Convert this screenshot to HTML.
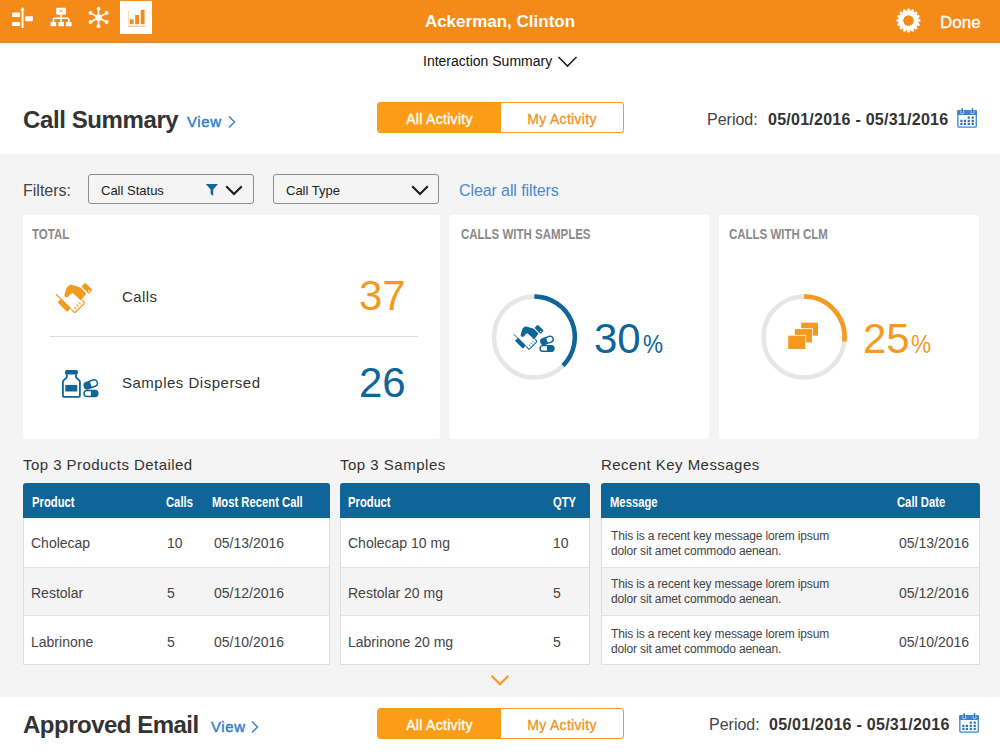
<!DOCTYPE html>
<html><head><meta charset="utf-8">
<style>
*{margin:0;padding:0;box-sizing:border-box}
html,body{width:1000px;height:754px;overflow:hidden;background:#fff;font-family:"Liberation Sans",sans-serif;color:#333}
.abs{position:absolute}
#hdr{position:absolute;left:0;top:0;width:1000px;height:42px;background:#f48b18}
#grey{position:absolute;left:0;top:154px;width:1000px;height:543px;background:#f4f4f4}
.t{position:absolute;white-space:nowrap;line-height:1}
.card{position:absolute;background:#fff;border-radius:3px}
.cap{position:absolute;font-weight:bold;color:#8a8a8a;font-size:14px;transform-origin:0 0;transform:scaleX(.82);white-space:nowrap;line-height:1}
.seg{position:absolute;width:247px;height:31px;border:1px solid #f39a1f;border-radius:3px;overflow:hidden;background:#fff}
.seg .a{position:absolute;left:0;top:0;width:123px;height:29px;background:#fb9d17;color:#fff;font-size:14px;-webkit-text-stroke:.35px #fff;letter-spacing:.3px;text-align:center;line-height:32px}
.seg .b{position:absolute;left:123px;top:0;width:122px;height:29px;color:#f0961e;font-size:14px;-webkit-text-stroke:.35px #f0961e;letter-spacing:.3px;text-align:center;line-height:32px}
.dd{position:absolute;height:30px;border:1px solid #8c8c8c;border-radius:3px;background:#f4f4f4}
.tbl{position:absolute;background:#fff;border:1px solid #dedede;border-top:none;border-radius:3px 3px 0 0}
.th{position:absolute;left:-1px;top:0;height:35px;background:#0f6598;border-radius:3px 3px 0 0}
.thx{position:absolute;color:#fff;font-weight:bold;font-size:15px;transform-origin:0 0;transform:scaleX(.75);white-space:nowrap;line-height:1}
.row{position:absolute;left:0;height:49px;border-top:1px solid #e3e3e3}
.row.g{background:#f4f4f4}
.msg{position:absolute;font-size:12px;color:#444;white-space:nowrap;line-height:15px;letter-spacing:-.15px}
.cell{position:absolute;font-size:14px;color:#444;white-space:nowrap;line-height:1}
</style></head><body>
<div id="hdr">
  <!-- icon 1 -->
  <svg class="abs" style="left:10px;top:6px" width="26" height="24" viewBox="10 6 26 24">
    <rect x="12" y="12.6" width="8" height="4.5" rx="1" fill="#fff"/>
    <rect x="12" y="21.9" width="8" height="4" rx="1" fill="#fff"/>
    <rect x="25.2" y="16.2" width="7.8" height="5" rx="1" fill="#fff"/>
    <rect x="21.6" y="9" width="1.9" height="19" fill="#fff"/>
    <path d="M20.3 10.5 L22.5 7 L24.7 10.5 Z" fill="#fff"/>
  </svg>
  <!-- icon 2 org -->
  <svg class="abs" style="left:48px;top:6px" width="26" height="24" viewBox="48 6 26 24">
    <rect x="56.2" y="7.7" width="9.8" height="7" rx="1" fill="#fff"/><rect x="59.2" y="9.8" width="3.8" height="2.6" fill="#f9c796"/>
    <rect x="60.3" y="14.5" width="1.6" height="8" fill="#fff"/>
    <path d="M53.4 22 V19.5 Q53.4 18.3 54.6 18.3 H67.6 Q68.8 18.3 68.8 19.5 V22" stroke="#fff" stroke-width="1.6" fill="none"/>
    <rect x="50.6" y="22" width="5.6" height="4.2" rx=".6" fill="#fff"/>
    <rect x="58.3" y="22" width="5.6" height="4.2" rx=".6" fill="#fff"/>
    <rect x="66" y="22" width="5.6" height="4.2" rx=".6" fill="#fff"/>
  </svg>
  <!-- icon 3 hub -->
  <svg class="abs" style="left:86px;top:5px" width="26" height="26" viewBox="86 5 26 26">
    <g stroke="#fff" stroke-width="1.6">
      <line x1="98.5" y1="17.8" x2="98.5" y2="8.7"/><line x1="98.5" y1="17.8" x2="98.5" y2="26.2"/>
      <line x1="98.5" y1="17.8" x2="90.5" y2="12.9"/><line x1="98.5" y1="17.8" x2="106.6" y2="12.9"/>
      <line x1="98.5" y1="17.8" x2="90.5" y2="22"/><line x1="98.5" y1="17.8" x2="106.6" y2="22"/>
    </g>
    <g fill="#fff">
      <circle cx="98.5" cy="17.8" r="3.3"/>
      <circle cx="98.5" cy="8.7" r="1.9"/><circle cx="98.5" cy="26.2" r="1.9"/>
      <circle cx="90.5" cy="12.9" r="1.9"/><circle cx="106.6" cy="12.9" r="1.9"/>
      <circle cx="90.5" cy="22" r="1.9"/><circle cx="106.6" cy="22" r="1.9"/>
    </g>
  </svg>
  <!-- icon 4 selected chart -->
  <div class="abs" style="left:120px;top:1px;width:32px;height:33px;background:#fff"></div>
  <svg class="abs" style="left:120px;top:1px" width="32" height="33" viewBox="120 1 32 33">
    <rect x="128" y="10.5" width=".8" height="14" fill="#f9d2a8"/>
    <rect x="129.8" y="19.3" width="3.8" height="4.9" fill="#f48b18"/>
    <rect x="135.2" y="15" width="3.9" height="9.2" fill="#f48b18"/>
    <rect x="140.8" y="9.8" width="3.8" height="14.4" fill="#f48b18"/>
    <rect x="128" y="25.6" width="17.2" height="1" fill="#f6b577"/>
  </svg>
  <div class="t" style="left:0;width:1000px;text-align:center;top:13px;font-size:17px;color:#fff;font-weight:bold">Ackerman, Clinton</div>
  <!-- gear -->
  <svg class="abs" style="left:895px;top:7px" width="28" height="28" viewBox="-13.5 -13.5 28 28"><g fill="#fff"><circle r="10.3"/><rect x="-1.35" y="-12" width="2.7" height="3" rx="1" transform="rotate(0.0)"/><rect x="-1.35" y="-12" width="2.7" height="3" rx="1" transform="rotate(22.5)"/><rect x="-1.35" y="-12" width="2.7" height="3" rx="1" transform="rotate(45.0)"/><rect x="-1.35" y="-12" width="2.7" height="3" rx="1" transform="rotate(67.5)"/><rect x="-1.35" y="-12" width="2.7" height="3" rx="1" transform="rotate(90.0)"/><rect x="-1.35" y="-12" width="2.7" height="3" rx="1" transform="rotate(112.5)"/><rect x="-1.35" y="-12" width="2.7" height="3" rx="1" transform="rotate(135.0)"/><rect x="-1.35" y="-12" width="2.7" height="3" rx="1" transform="rotate(157.5)"/><rect x="-1.35" y="-12" width="2.7" height="3" rx="1" transform="rotate(180.0)"/><rect x="-1.35" y="-12" width="2.7" height="3" rx="1" transform="rotate(202.5)"/><rect x="-1.35" y="-12" width="2.7" height="3" rx="1" transform="rotate(225.0)"/><rect x="-1.35" y="-12" width="2.7" height="3" rx="1" transform="rotate(247.5)"/><rect x="-1.35" y="-12" width="2.7" height="3" rx="1" transform="rotate(270.0)"/><rect x="-1.35" y="-12" width="2.7" height="3" rx="1" transform="rotate(292.5)"/><rect x="-1.35" y="-12" width="2.7" height="3" rx="1" transform="rotate(315.0)"/><rect x="-1.35" y="-12" width="2.7" height="3" rx="1" transform="rotate(337.5)"/></g><circle r="5.3" fill="#f48b18"/></svg>
  <div class="t" style="left:940px;top:14px;font-size:17px;color:#fff;-webkit-text-stroke:.3px #fff">Done</div>
</div>

<div class="abs" style="left:0;top:41px;width:1000px;height:1px;background:#ea8618"></div><div class="abs" style="left:0;top:42px;width:1000px;height:1px;background:#dc9040"></div><div class="abs" style="left:0;top:43px;width:1000px;height:1px;background:#fdf8e6"></div>
<div class="t" style="left:423px;top:54px;font-size:14px;color:#111">Interaction Summary</div>
<svg class="abs" style="left:557px;top:55px" width="21" height="13" viewBox="0 0 21 13"><path d="M1.5 2 L10.5 11 L19.5 2" stroke="#222" stroke-width="1.6" fill="none"/></svg>

<div class="t" style="left:23px;top:108px;font-size:24px;font-weight:bold;color:#333;letter-spacing:-.4px">Call Summary</div>
<div class="t" style="left:187px;top:114px;font-size:15px;letter-spacing:.6px;color:#2f80c8;-webkit-text-stroke:.45px #2f80c8">View</div>
<svg class="abs" style="left:227px;top:115px" width="10" height="14" viewBox="0 0 10 14"><path d="M2 1.5 L7.5 7 L2 12.5" stroke="#2f80c8" stroke-width="1.4" fill="none"/></svg>

<div class="seg" style="left:377px;top:102px"><div class="a">All Activity</div><div class="b">My Activity</div></div>

<div class="t" style="left:707px;top:112px;font-size:16px;color:#444">Period:</div>
<div class="t" style="left:768px;top:112px;font-size:16px;font-weight:bold;color:#333;letter-spacing:.26px">05/01/2016 - 05/31/2016</div>
<svg class="abs" style="left:956px;top:106px" width="23" height="23" viewBox="0 0 23 23">
  <rect x="1.85" y="4.65" width="18.4" height="16.5" rx="1.2" fill="none" stroke="#3a84d4" stroke-width="1.3"/>
  <rect x="1.2" y="4" width="19.7" height="5" rx="1" fill="#3a84d4"/>
  <circle cx="6.2" cy="6.2" r="1.6" fill="none" stroke="#cfe0f5" stroke-width=".9"/>
  <circle cx="16.5" cy="6.2" r="1.6" fill="none" stroke="#cfe0f5" stroke-width=".9"/>
  <rect x="5.5" y="2.2" width="1.4" height="4.4" fill="#2a6fba"/><rect x="15.8" y="2.2" width="1.4" height="4.4" fill="#2a6fba"/>
  <g fill="#2f6fbf">
    <rect x="11.7" y="10.5" width="2.2" height="2.2"/><rect x="15.6" y="10.5" width="2.2" height="2.2"/>
    <rect x="4.3" y="13.8" width="2.2" height="2.2"/><rect x="7.8" y="13.8" width="2.2" height="2.2"/><rect x="11.7" y="13.8" width="2.2" height="2.2"/><rect x="15.6" y="13.8" width="2.2" height="2.2"/>
    <rect x="4.3" y="16.8" width="2.2" height="2.2"/><rect x="7.8" y="16.8" width="2.2" height="2.2"/><rect x="11.7" y="16.8" width="2.2" height="2.2"/><rect x="15.6" y="16.8" width="2.2" height="2.2"/>
  </g>
</svg>

<div id="grey"></div>

<div class="t" style="left:23px;top:183px;font-size:16px;color:#444">Filters:</div>
<div class="dd" style="left:88px;top:174px;width:166px"></div>
<div class="t" style="left:101px;top:184px;font-size:13px;color:#222">Call Status</div>
<svg class="abs" style="left:205px;top:183px" width="14" height="14" viewBox="0 0 14 14"><path d="M0.8 1 H13 L8.2 6.6 V13 L5.6 10.8 V6.6 Z" fill="#0f6598"/></svg>
<svg class="abs" style="left:225px;top:185px" width="18" height="11" viewBox="0 0 18 11"><path d="M1.2 1.2 L9 9 L16.8 1.2" stroke="#1a1a1a" stroke-width="2" fill="none"/></svg>
<div class="dd" style="left:273px;top:174px;width:166px"></div>
<div class="t" style="left:286px;top:184px;font-size:13px;color:#222">Call Type</div>
<svg class="abs" style="left:411px;top:185px" width="18" height="11" viewBox="0 0 18 11"><path d="M1.2 1.2 L9 9 L16.8 1.2" stroke="#1a1a1a" stroke-width="2" fill="none"/></svg>
<div class="t" style="left:459px;top:183px;font-size:16px;color:#4a8bd0;letter-spacing:-.1px">Clear all filters</div>

<div class="card" style="left:23px;top:215px;width:417px;height:224px"></div>
<div class="card" style="left:449px;top:215px;width:260px;height:224px"></div>
<div class="card" style="left:719px;top:215px;width:260px;height:224px"></div>

<div class="cap" style="left:32px;top:227px">TOTAL</div>
<div class="cap" style="left:461px;top:227px">CALLS WITH SAMPLES</div>
<div class="cap" style="left:729px;top:227px">CALLS WITH CLM</div>

<svg width="0" height="0" style="position:absolute"><defs><g id="hs">
  <g fill="currentColor">
    <path d="M14.4 17.4 L15.6 12.6 Q16.6 8.4 19.4 7.2 Q20.8 6.6 22.4 7.1 L29.6 9.3 Q30.6 9.6 31.4 10.4 L35.6 14.8 Q36.2 15.6 35.6 16.4 L31.6 21.8 Q30.8 22.6 30 21.8 L22.8 15 L20.2 16.6 L18.6 18.6 Q17.6 19.4 16.2 19.2 Q14.2 18.8 14.4 17.4 Z"/>
    <path d="M31.4 8.6 L34.4 5.4 Q35.2 4.6 36 5.4 L41.8 11.2 Q42.6 12 41.8 12.8 L38.6 15.8 Z"/>
    <path d="M8.2 23.4 L11.4 20.4 L21 30 L18 33.2 Q17.2 34 16.4 33.2 L8.4 25.2 Q7.6 24.2 8.2 23.4 Z"/>
  </g>
  <path d="M6 16.3 L11.6 21.6" stroke="currentColor" stroke-width="1.2"/>
  <circle cx="38.8" cy="12.8" r="0.9" fill="#fff"/>
  <path d="M21.2 31.2 L24 34 Q24.8 34.8 25.6 34 L34 25.6 Q34.6 25 34 24.4 L31.8 22.2" stroke="currentColor" stroke-width="1.3" fill="none"/>
  <g stroke="currentColor" stroke-width="1.1">
    <line x1="24.4" y1="28.8" x2="26.4" y2="30.8"/><line x1="26.6" y1="26.6" x2="28.6" y2="28.6"/><line x1="28.8" y1="24.4" x2="30.8" y2="26.4"/>
  </g>
</g></defs></svg>
<!-- handshake orange -->
<svg class="abs" style="left:50px;top:278px;color:#f39a1f" width="48" height="40" viewBox="0 0 48 40"><use href="#hs"/></svg>
<div class="t" style="left:122px;top:289px;font-size:15px;color:#333;letter-spacing:.4px">Calls</div>
<div class="t" style="left:359px;top:275px;font-size:42px;color:#f39a1f">37</div>
<div class="abs" style="left:50px;top:336px;width:368px;height:1px;background:#dcdcdc"></div>
<!-- bottle -->
<svg class="abs" style="left:50px;top:360px" width="60" height="45" viewBox="0 0 60 45">
  <g fill="none" stroke="#0f6598" stroke-width="1.8">
    <path d="M16.8 14.2 V17.4 L13.6 20.4 Q12.9 21.1 12.9 22.1 V35.2 Q12.9 36.9 14.6 36.9 H28.2 Q29.9 36.9 29.9 35.2 V22.1 Q29.9 21.1 29.2 20.4 L26 17.4 V14.2"/>
  </g>
  <rect x="15" y="9.9" width="12.9" height="4.6" rx="1.6" fill="#0f6598"/>
  <rect x="15.3" y="24.9" width="12" height="6.6" fill="#0f6598"/>
  <g transform="rotate(-20 40.8 24.3)">
    <rect x="34" y="21" width="13.6" height="6.6" rx="3.3" fill="none" stroke="#0f6598" stroke-width="1.5"/>
    <path d="M37.3 21 H40.8 V27.6 H37.3 A3.3 3.3 0 0 1 37.3 21 Z" fill="#0f6598"/>
  </g>
  <rect x="34" y="30.6" width="13.8" height="6" rx="3" fill="none" stroke="#0f6598" stroke-width="1.5"/>
  <path d="M40.9 30.6 H44.8 A3 3 0 0 1 44.8 36.6 H40.9 Z" fill="#0f6598"/>
</svg>
<div class="t" style="left:122px;top:375px;font-size:15px;color:#333;letter-spacing:.5px">Samples Dispersed</div>
<div class="t" style="left:359px;top:362px;font-size:42px;color:#0f6598">26</div>

<!-- ring 1 -->
<svg class="abs" style="left:489px;top:292px" width="90" height="90" viewBox="0 0 90 90">
  <circle cx="45.4" cy="45" r="40.5" fill="none" stroke="#e6e6e6" stroke-width="4.5"/>
  <path d="M45.4 4.5 A40.5 40.5 0 0 1 74 73.6" fill="none" stroke="#0f6598" stroke-width="4.5"/>
</svg>

<svg class="abs" style="left:505px;top:318px;color:#0f6598" width="56" height="40" viewBox="505 318 56 40">
  <g transform="translate(508.8 320.9) scale(.82)"><use href="#hs"/></g>
  <g transform="rotate(-20 547 340.4)">
    <rect x="540.6" y="337.4" width="12.8" height="6" rx="3" fill="none" stroke="#0f6598" stroke-width="1.4"/>
    <path d="M543.6 337.4 H547 V343.4 H543.6 A3 3 0 0 1 543.6 337.4 Z" fill="#0f6598"/>
  </g>
  <rect x="540" y="345.6" width="14" height="5.6" rx="2.8" fill="none" stroke="#0f6598" stroke-width="1.4"/>
  <path d="M547 345.6 H551.2 A2.8 2.8 0 0 1 551.2 351.2 H547 Z" fill="#0f6598"/>
</svg>
<div class="t" style="left:594px;top:318px;font-size:42px;color:#0f6598">30</div>
<div class="t" style="left:643px;top:332px;font-size:25px;transform:scaleX(.9);transform-origin:0 0;color:#0f6598">%</div>
<!-- ring 2 -->
<svg class="abs" style="left:759px;top:292px" width="90" height="90" viewBox="0 0 90 90">
  <circle cx="45" cy="45" r="40.5" fill="none" stroke="#e6e6e6" stroke-width="4.5"/>
  <path d="M45 4.5 A40.5 40.5 0 0 1 85.4 49.5" fill="none" stroke="#f39a1f" stroke-width="4.5"/>
</svg>
<svg class="abs" style="left:785px;top:320px" width="36" height="32" viewBox="785 320 36 32">
  <rect x="801.2" y="322.7" width="16.8" height="13" fill="#f39a1f"/>
  <rect x="794" y="328.3" width="18.8" height="14.9" fill="#fff"/>
  <rect x="794.8" y="329.1" width="17.2" height="13.3" fill="#f39a1f"/>
  <rect x="787.4" y="334.9" width="18.8" height="14.9" fill="#fff"/>
  <rect x="788.2" y="335.7" width="17.2" height="13.3" fill="#f39a1f"/>
</svg>
<div class="t" style="left:863px;top:318px;font-size:42px;color:#f39a1f">25</div>
<div class="t" style="left:911px;top:332px;font-size:25px;transform:scaleX(.9);transform-origin:0 0;color:#f39a1f">%</div>

<!-- section titles -->
<div class="t" style="left:23px;top:457px;font-size:15px;color:#333;letter-spacing:.45px">Top 3 Products Detailed</div>
<div class="t" style="left:340px;top:457px;font-size:15px;color:#333;letter-spacing:.5px">Top 3 Samples</div>
<div class="t" style="left:601px;top:457px;font-size:15px;color:#333;letter-spacing:.45px">Recent Key Messages</div>

<!-- table 1 -->
<div class="tbl" style="left:23px;top:483px;width:307px;height:182px">
  <div class="th" style="width:307px"></div>
  <div class="row" style="top:34px;width:305px;border-top:none"></div>
  <div class="row g" style="top:84px;width:305px"></div>
  <div class="row" style="top:132px;width:305px"></div>
</div>
<div class="thx" style="left:32px;top:494px">Product</div>
<div class="thx" style="left:166px;top:494px">Calls</div>
<div class="thx" style="left:212px;top:494px">Most Recent Call</div>
<div class="cell" style="left:31px;top:536px">Cholecap</div>
<div class="cell" style="left:167px;top:536px">10</div>
<div class="cell" style="left:214px;top:536px">05/13/2016</div>
<div class="cell" style="left:31px;top:586px">Restolar</div>
<div class="cell" style="left:167px;top:586px">5</div>
<div class="cell" style="left:214px;top:586px">05/12/2016</div>
<div class="cell" style="left:31px;top:635px">Labrinone</div>
<div class="cell" style="left:167px;top:635px">5</div>
<div class="cell" style="left:214px;top:635px">05/10/2016</div>

<!-- table 2 -->
<div class="tbl" style="left:340px;top:483px;width:250px;height:182px">
  <div class="th" style="width:250px"></div>
  <div class="row" style="top:34px;width:248px;border-top:none"></div>
  <div class="row g" style="top:84px;width:248px"></div>
  <div class="row" style="top:132px;width:248px"></div>
</div>
<div class="thx" style="left:348px;top:494px">Product</div>
<div class="thx" style="left:553px;top:494px">QTY</div>
<div class="cell" style="left:348px;top:536px">Cholecap 10 mg</div>
<div class="cell" style="left:553px;top:536px">10</div>
<div class="cell" style="left:348px;top:586px">Restolar 20 mg</div>
<div class="cell" style="left:553px;top:586px">5</div>
<div class="cell" style="left:348px;top:635px">Labrinone 20 mg</div>
<div class="cell" style="left:553px;top:635px">5</div>

<!-- table 3 -->
<div class="tbl" style="left:601px;top:483px;width:379px;height:182px">
  <div class="th" style="width:379px"></div>
  <div class="row" style="top:34px;width:377px;border-top:none"></div>
  <div class="row g" style="top:84px;width:377px"></div>
  <div class="row" style="top:132px;width:377px"></div>
</div>
<div class="thx" style="left:610px;top:494px">Message</div>
<div class="thx" style="left:897px;top:494px">Call Date</div>
<div class="msg" style="left:611px;top:529px">This is a recent key message lorem ipsum<br>dolor sit amet commodo aenean.</div>
<div class="cell" style="left:899px;top:536px">05/13/2016</div>
<div class="msg" style="left:611px;top:577px">This is a recent key message lorem ipsum<br>dolor sit amet commodo aenean.</div>
<div class="cell" style="left:899px;top:586px">05/12/2016</div>
<div class="msg" style="left:611px;top:627px">This is a recent key message lorem ipsum<br>dolor sit amet commodo aenean.</div>
<div class="cell" style="left:899px;top:635px">05/10/2016</div>

<svg class="abs" style="left:490px;top:674px" width="20" height="13" viewBox="0 0 20 13"><path d="M1.5 1.8 L10 10.2 L18.5 1.8" stroke="#f39a1f" stroke-width="2.2" fill="none"/></svg>

<!-- bottom section -->
<div class="t" style="left:23px;top:713px;font-size:24px;font-weight:bold;color:#333;letter-spacing:-.5px">Approved Email</div>
<div class="t" style="left:211px;top:719px;font-size:15px;letter-spacing:.6px;color:#2f80c8;-webkit-text-stroke:.45px #2f80c8">View</div>
<svg class="abs" style="left:250px;top:720px" width="10" height="14" viewBox="0 0 10 14"><path d="M2 1.5 L7.5 7 L2 12.5" stroke="#2f80c8" stroke-width="1.4" fill="none"/></svg>
<div class="seg" style="left:377px;top:708px"><div class="a">All Activity</div><div class="b">My Activity</div></div>
<div class="t" style="left:709px;top:717px;font-size:16px;color:#444">Period:</div>
<div class="t" style="left:769px;top:717px;font-size:16px;font-weight:bold;color:#333;letter-spacing:.27px">05/01/2016 - 05/31/2016</div>
<svg class="abs" style="left:958px;top:711px" width="23" height="23" viewBox="0 0 23 23">
  <rect x="1.85" y="4.65" width="18.4" height="16.5" rx="1.2" fill="none" stroke="#3a84d4" stroke-width="1.3"/>
  <rect x="1.2" y="4" width="19.7" height="5" rx="1" fill="#3a84d4"/>
  <circle cx="6.2" cy="6.2" r="1.6" fill="none" stroke="#cfe0f5" stroke-width=".9"/>
  <circle cx="16.5" cy="6.2" r="1.6" fill="none" stroke="#cfe0f5" stroke-width=".9"/>
  <rect x="5.5" y="2.2" width="1.4" height="4.4" fill="#2a6fba"/><rect x="15.8" y="2.2" width="1.4" height="4.4" fill="#2a6fba"/>
  <g fill="#2f6fbf">
    <rect x="11.7" y="10.5" width="2.2" height="2.2"/><rect x="15.6" y="10.5" width="2.2" height="2.2"/>
    <rect x="4.3" y="13.8" width="2.2" height="2.2"/><rect x="7.8" y="13.8" width="2.2" height="2.2"/><rect x="11.7" y="13.8" width="2.2" height="2.2"/><rect x="15.6" y="13.8" width="2.2" height="2.2"/>
    <rect x="4.3" y="16.8" width="2.2" height="2.2"/><rect x="7.8" y="16.8" width="2.2" height="2.2"/><rect x="11.7" y="16.8" width="2.2" height="2.2"/><rect x="15.6" y="16.8" width="2.2" height="2.2"/>
  </g>
</svg>
</body></html>
